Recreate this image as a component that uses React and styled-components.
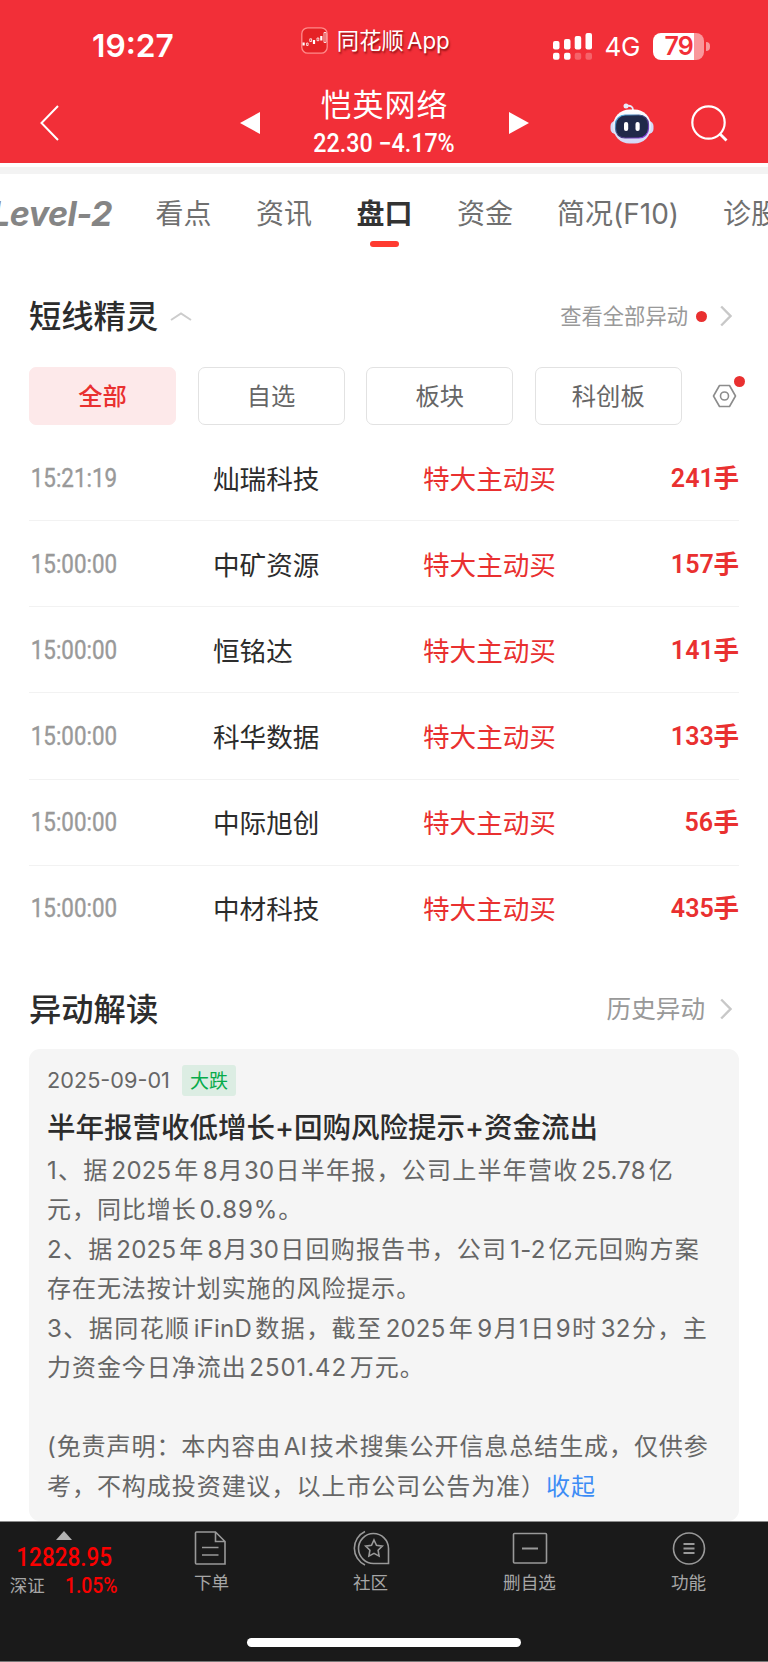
import styled, { createGlobalStyle, css } from "styled-components";

const GlobalStyle = createGlobalStyle`
  * {
    box-sizing: border-box;
  }

  body {
    margin: 0;
    background: #fff;
    font-family: Inter, "Noto Sans CJK SC", sans-serif;
    color: #333;
  }

  svg {
    display: block;
    flex: none;
  }
`;

const TABS = [
  { label: "看点", width: 56 },
  { label: "资讯", width: 56 },
  { label: "盘口", width: 56, active: true },
  { label: "资金", width: 56 },
  { label: "简况(F10)", width: 121 },
  { label: "诊股", width: 56 },
];

const FILTERS = ["全部", "自选", "板块", "科创板"];

const TRADES = [
  { time: "15:21:19", name: "灿瑞科技", volume: "241" },
  { time: "15:00:00", name: "中矿资源", volume: "157" },
  { time: "15:00:00", name: "恒铭达", volume: "141" },
  { time: "15:00:00", name: "科华数据", volume: "133" },
  { time: "15:00:00", name: "中际旭创", volume: "56" },
  { time: "15:00:00", name: "中材科技", volume: "435" },
];

const REPORT_LINES = [
  { text: "1、据 2025 年 8月30日半年报，公司上半年营收 25.78 亿", width: 626 },
  { text: "元，同比增长 0.89%。", width: 0 },
  { text: "2、据 2025 年 8月30日回购报告书，公司 1-2 亿元回购方案", width: 652 },
  { text: "存在无法按计划实施的风险提示。", width: 0 },
  { text: "3、据同花顺 iFinD 数据，截至 2025 年 9月1日9时 32分，主", width: 660 },
  { text: "力资金今日净流出 2501.42 万元。", width: 0 },
  { text: "", width: 0 },
  { text: "(免责声明：本内容由 AI 技术搜集公开信息总结生成，仅供参", width: 661 },
];

const Screen = styled.div`
  display: flex;
  flex-direction: column;
  width: 768px;
  height: 1662px;
  overflow: hidden;
  background: #fff;
`;

const digits = css`
  display: inline-block;
  font-family: Roboto, "Noto Sans CJK SC", sans-serif;
  white-space: nowrap;
`;

/* ---------- red header ---------- */

const Header = styled.header`
  flex: none;
  height: 163px;
  background: #f22f38;
  color: #fff;
`;

const StatusBar = styled.div`
  display: flex;
  align-items: center;
  height: 80px;
  padding: 12px 58px 0 92px;
`;

const Clock = styled.span`
  width: 210px;
  font-size: 31.7px;
  font-weight: 600;
  line-height: 40px;
`;

const AppBadge = styled.div`
  display: flex;
  align-items: center;
  gap: 9px;
  width: 251px;
  margin-top: -11px;
  font-size: 22.3px;
  line-height: 30px;
  white-space: nowrap;
  word-spacing: -3px;
  text-shadow: 1px 2px 2px rgba(90, 0, 0, 0.65);
`;

const Network = styled.span`
  width: 49px;
  margin-top: 2px;
  padding-left: 12px;
  font-size: 26px;
  line-height: 30px;
  letter-spacing: -0.3px;
`;

const Battery = styled.div`
  display: flex;
  align-items: center;
  justify-content: center;
  width: 51px;
  height: 27px;
  margin-left: 12px;
  border-radius: 8px;
  background: linear-gradient(90deg, #fff 41px, #f9979b 41px);
  color: #f22f38;
  font-size: 25px;
  font-weight: 600;
  line-height: 27px;
  letter-spacing: -1px;
`;

const BatteryTip = styled.i`
  width: 4px;
  height: 9px;
  margin-left: 2px;
  border-radius: 0 5px 5px 0;
  background: #f9979b;
`;

const TitleBar = styled.div`
  display: flex;
  align-items: center;
  height: 83px;
  padding: 3px 40px 0;
`;

const StockTitle = styled.div`
  display: flex;
  flex-direction: column;
  align-items: center;
  width: 251px;
  margin-top: -1px;
`;

const StockName = styled.h1`
  margin: 0;
  font-size: 31px;
  font-weight: 400;
  line-height: 42px;
  letter-spacing: 1px;
`;

const StockPrice = styled.span`
  ${digits}
  font-size: 25px;
  font-weight: 500;
  line-height: 35px;
  transform: scaleX(0.93);
`;

const Strip = styled.div`
  flex: none;
  height: 11px;
  border-top: 4px solid #fff;
  background: #f3f3f3;
`;

/* ---------- tabs ---------- */

const Tabs = styled.nav`
  display: flex;
  flex: none;
  gap: 44.5px;
  height: 88px;
  padding-top: 18px;
  overflow: hidden;
`;

const LevelTab = styled.span`
  flex: none;
  width: 111px;
  font-size: 34px;
  font-style: italic;
  font-weight: 700;
  line-height: 43px;
  letter-spacing: -0.5px;
  color: #858585;
  text-indent: -9px;
  white-space: nowrap;
`;

const Tab = styled.span`
  display: flex;
  flex: none;
  flex-direction: column;
  align-items: center;
  gap: 5px;
  width: ${({ $width }) => $width}px;
  font-size: 28px;
  font-weight: ${({ $active }) => ($active ? 700 : 400)};
  line-height: 44px;
  color: ${({ $active }) => ($active ? "#333" : "#707070")};
  white-space: nowrap;

  &::after {
    width: 29px;
    height: 6px;
    border-radius: 3px;
    background: ${({ $active }) => ($active ? "#ff3b30" : "transparent")};
    content: "";
  }
`;

/* ---------- sections ---------- */

const SectionHead = styled.div`
  display: flex;
  flex: none;
  align-items: center;
  height: ${({ $height }) => $height}px;
  padding: ${({ $top }) => $top}px 36px 0 29px;
`;

const SectionTitle = styled.h2`
  margin: 2px 12px 0 0;
  font-size: 32.3px;
  font-weight: 500;
  line-height: 44px;
  color: #2c2c2c;
`;

const MoreLink = styled.span`
  display: flex;
  align-items: center;
  margin-left: auto;
  font-size: ${({ $size }) => $size}px;
  line-height: 32px;
  color: #999;
`;

const Dot = styled.i`
  width: 11px;
  height: 11px;
  margin: 0 13px 0 8px;
  border-radius: 50%;
  background: #e93030;
`;

const Filters = styled.div`
  display: flex;
  flex: none;
  align-items: center;
  gap: 21.6px;
  height: 58px;
  margin: 5px 29px 10px;
`;

const FilterButton = styled.button`
  width: 147px;
  height: 58px;
  padding: 0 0 3px;
  border: 1px solid ${({ $active }) => ($active ? "#fde9ea" : "#e2e2e2")};
  border-radius: 7px;
  background: ${({ $active }) => ($active ? "#fde9ea" : "#fff")};
  color: ${({ $active }) => ($active ? "#e93030" : "#666")};
  font-family: inherit;
  font-size: 24.3px;
  font-weight: ${({ $active }) => ($active ? 500 : 400)};
`;

const Settings = styled.div`
  position: relative;
  margin-left: 9px;
`;

const SettingsDot = styled.i`
  position: absolute;
  top: -8px;
  right: -8px;
  width: 11px;
  height: 11px;
  border-radius: 50%;
  background: #e93030;
`;

const TradeRow = styled.div`
  display: grid;
  flex: none;
  grid-template-columns: 184px 210px 1fr auto;
  align-items: center;
  height: 86.15px;
  margin: 0 29px;
  padding-top: 2px;
  border-bottom: 1.5px solid ${({ $last }) => ($last ? "transparent" : "#f2f2f2")};
  font-size: 26.6px;
  line-height: 40px;
`;

const TradeTime = styled.span`
  ${digits}
  padding-left: 2px;
  font-size: 25px;
  color: #999;
  -webkit-text-stroke: 0.4px #999;
  transform: scaleX(0.895);
  transform-origin: left;
`;

const TradeName = styled.span`
  color: #2c2c2c;
`;

const TradeKind = styled.span`
  color: #e93030;
`;

const TradeVolume = styled.span`
  display: flex;
  align-items: center;
  margin-top: -2px;
  font-size: 25.5px;
  font-weight: 700;
  color: #e93030;

  b {
    ${digits}
    font-size: 25.5px;
    font-weight: 600;
    transform: scaleX(0.98);
    transform-origin: right;
  }
`;

/* ---------- report card ---------- */

const Card = styled.article`
  flex: none;
  height: 472px;
  margin: 0 29px;
  padding: 16px 18px 0;
  border-radius: 11px;
  background: #f5f5f5;
`;

const CardMeta = styled.div`
  display: flex;
  align-items: center;
  gap: 12px;
  height: 31px;
  font-size: 21.7px;
  color: #666;
`;

const Tag = styled.span`
  display: flex;
  align-items: center;
  justify-content: center;
  width: 54px;
  height: 31px;
  padding-bottom: 2px;
  border-radius: 3px;
  background: #dcede3;
  color: #07ab4b;
  font-size: 19px;
`;

const CardTitle = styled.h3`
  margin: 12px 0 3px;
  font-size: 28.5px;
  font-weight: 500;
  line-height: 40px;
  color: #2c2c2c;
  white-space: nowrap;
`;

const ReportLine = styled.p`
  width: ${({ $width }) => ($width ? `${$width}px` : "auto")};
  height: 39.5px;
  margin: 0;
  font-size: 24px;
  line-height: 39.5px;
  letter-spacing: ${({ $width }) => ($width ? 0.2 : 0.95)}px;
  word-spacing: -5px;
  text-align-last: ${({ $width }) => ($width ? "justify" : "left")};
  color: #666;
  white-space: nowrap;
`;

const Collapse = styled.a`
  color: #3d8df5;
`;

/* ---------- bottom bar ---------- */

const Footer = styled.footer`
  display: flex;
  flex: none;
  flex-direction: column;
  align-items: center;
  height: 141px;
  border-top: 1px solid #8c8c8c;
  border-bottom: 1px solid #777;
  background: #1a1a1a;
  color: #a6a6a6;
`;

const FooterRow = styled.div`
  display: flex;
  align-items: flex-start;
  width: 768px;
  height: 116px;
`;

const IndexQuote = styled.div`
  display: flex;
  flex-direction: column;
  align-items: center;
  width: 132px;
  padding: 9px 4px 0 0;
`;

const IndexValue = styled.span`
  ${digits}
  margin-top: 3px;
  font-size: 25px;
  font-weight: 500;
  line-height: 30px;
  color: #f90000;
  transform: scaleX(0.9);
`;

const IndexChange = styled.span`
  display: flex;
  align-items: center;
  gap: 17px;
  margin-top: -1px;
  padding-left: 2px;
  font-size: 17.5px;
  line-height: 28px;

  b {
    ${digits}
    font-size: 21.5px;
    font-weight: 500;
    color: #f90000;
    transform: scaleX(0.9);
  }
`;

const FooterItem = styled.div`
  display: flex;
  flex-direction: column;
  align-items: center;
  gap: 5px;
  width: 159px;
  padding-top: 8px;
  font-size: 17.6px;
  line-height: 24px;
`;

const HomeIndicator = styled.i`
  width: 274px;
  height: 9px;
  border-radius: 5px;
  background: #fff;
`;

const AppIcon = () => (
  <svg width="27" height="27" viewBox="0 0 27 27">
    <rect x=".8" y=".8" width="25.4" height="25.4" rx="6" fill="#e52226" stroke="#ff8b8b" strokeWidth="1.3" />
    <path d="M2.600 15.500v3M13 13v4M20.300 9v4.500" stroke="#fff" strokeWidth="2.200" />
    <path d="M5.600 16h1.500v2.500H5.600zM8.800 11.800h1.800v2.700H8.800zM16 11h1.800v2.700H16zM23 5.500h2v10h-2z" fill="none" stroke="#fff" strokeWidth=".8" />
  </svg>
);

const Signal = () => (
  <svg width="40" height="27" viewBox="0 0 40 27" fill="#fff">
    <rect y="8" width="6.500" height="8.500" rx="2" />
    <rect x="11" y="6" width="6.500" height="10.500" rx="2" />
    <rect x="21.700" y="3" width="6.500" height="13.500" rx="2" />
    <rect x="32.500" width="6.500" height="16.500" rx="2" />
    <rect y="19.800" width="6.500" height="7" rx="2" />
    <rect x="11" y="19.800" width="6.500" height="7" rx="2" />
    <rect x="21.700" y="19.800" width="6.500" height="7" rx="2" opacity=".25" />
    <rect x="32.500" y="19.800" width="6.500" height="7" rx="2" opacity=".25" />
  </svg>
);

const SignalSlot = styled.span`
  margin-left: 2px;
`;

const BackIcon = styled.svg`
  margin-right: 181px;
`;

const RobotIcon = styled.svg`
  margin-right: 37px;
  margin-left: 81px;
`;

const Robot = () => (
  <RobotIcon width="44" height="41" viewBox="0 0 44 41">
    <defs>
      <linearGradient id="shell" x1="0" y1="0" x2="0" y2="1">
        <stop offset="0" stopColor="#fff" />
        <stop offset="1" stopColor="#d3d7f5" />
      </linearGradient>
      <linearGradient id="rim" x1="0" y1="0" x2="1" y2="1">
        <stop offset="0" stopColor="#55c4f4" />
        <stop offset=".5" stopColor="#3b3970" />
        <stop offset="1" stopColor="#9a43ef" />
      </linearGradient>
    </defs>
    <path d="M16 3c5-1 7 1 7 4" fill="none" stroke="#e6eafa" strokeWidth="1.800" />
    <circle cx="16" cy="3" r="2.500" fill="#e8ecfa" />
    <rect x=".5" y="18" width="43" height="13" rx="5" fill="#d5daf6" />
    <rect x="3" y="6.500" width="38" height="34" rx="16.500" fill="url(#shell)" />
    <rect x="5.500" y="12" width="33" height="23" rx="9.500" fill="#202949" stroke="url(#rim)" strokeWidth="1.200" />
    <rect x="14" y="19" width="4.200" height="9" rx="2" fill="#fff" />
    <rect x="25.500" y="19" width="4.200" height="9" rx="2" fill="#fff" />
  </RobotIcon>
);

const Chevron = () => (
  <svg width="12" height="22" viewBox="0 0 12 22" fill="none" stroke="#c8c8c8" strokeWidth="2.400">
    <path d="M1.200 1.500l9.300 9.500-9.300 9.500" />
  </svg>
);

const ChevronGap = styled.i`
  width: 15px;
`;

const OrderIcon = () => (
  <svg width="36" height="36" viewBox="2.500 0 36 36" fill="none" stroke="#999" strokeWidth="1.600">
    <path d="M5 2h19l9.500 9.500V34H5a1 1 0 0 1-1-1V3a1 1 0 0 1 1-1zM24 2v9.500h9.500" />
    <path d="M10.500 17.500H27M10.500 25H27" />
  </svg>
);

const CommunityIcon = () => (
  <svg width="38" height="36" viewBox="0 0 38 36" fill="none" stroke="#999" strokeWidth="1.600">
    <path d="M36.500 33.500H22A15 15 0 1 1 36.500 18.500zM13 1.500a18.500 18.500 0 0 0 0 33.500" />
    <path d="M22 10l2.500 5.300 5.800.8-4.200 4.100 1 5.900-5.100-2.800-5.100 2.800 1-5.900-4.200-4.100 5.800-.8z" />
  </svg>
);

const RemoveIcon = () => (
  <svg width="36" height="36" viewBox="0 0 36 36" fill="none" stroke="#999" strokeWidth="1.600">
    <rect x="1.500" y="3.500" width="33" height="29.500" rx="1" />
    <path d="M10 18.500h16" strokeWidth="2" />
  </svg>
);

const FunctionIcon = () => (
  <svg width="36" height="36" viewBox="0 0 36 36" fill="none" stroke="#999" strokeWidth="1.600">
    <circle cx="18" cy="18.500" r="15.500" />
    <path d="M12.500 14h11M12.500 18.500h11M12.500 23h11" strokeWidth="1.800" />
  </svg>
);

const FOOTER_ITEMS = [
  { label: "下单", icon: OrderIcon },
  { label: "社区", icon: CommunityIcon },
  { label: "删自选", icon: RemoveIcon },
  { label: "功能", icon: FunctionIcon },
];

function App() {
  return (
    <Screen>
      <GlobalStyle />
      <Header>
        <StatusBar>
          <Clock>19:27</Clock>
          <AppBadge>
            <AppIcon />
            同花顺 App
          </AppBadge>
          <SignalSlot>
            <Signal />
          </SignalSlot>
          <Network>4G</Network>
          <Battery>79</Battery>
          <BatteryTip />
        </StatusBar>
        <TitleBar>
          <BackIcon width="19" height="36" viewBox="0 0 19 36" fill="none" stroke="#fff" strokeWidth="2">
            <path d="M18 1L1.500 18 18 35" />
          </BackIcon>
          <svg width="20" height="22" fill="#fff">
            <path d="M20 0v22L0 11z" />
          </svg>
          <StockTitle>
            <StockName>恺英网络</StockName>
            <StockPrice>22.30 −4.17%</StockPrice>
          </StockTitle>
          <svg width="20" height="22" fill="#fff">
            <path d="M0 0v22l20-11z" />
          </svg>
          <Robot />
          <svg width="37" height="37" viewBox="0 0 37 37" fill="none" stroke="#fff" strokeWidth="2.200">
            <circle cx="17.500" cy="17.500" r="16.200" />
            <path d="M28.500 28.500l7 7" strokeWidth="2.800" />
          </svg>
        </TitleBar>
      </Header>
      <Strip />

      <Tabs>
        <LevelTab>Level-2</LevelTab>
        {TABS.map(({ label, width, active }) => (
          <Tab key={label} $width={width} $active={active}>
            {label}
          </Tab>
        ))}
      </Tabs>

      <SectionHead $height={100} $top={8}>
        <SectionTitle>短线精灵</SectionTitle>
        <svg width="22" height="9" viewBox="0 0 22 9" fill="none" stroke="#ccc" strokeWidth="2">
          <path d="M1 8l10-6.500L21 8" />
        </svg>
        <MoreLink $size={21.3}>
          查看全部异动
          <Dot />
          <Chevron />
        </MoreLink>
      </SectionHead>

      <Filters>
        {FILTERS.map((filter, index) => (
          <FilterButton key={filter} $active={index === 0}>
            {filter}
          </FilterButton>
        ))}
        <Settings>
          <svg width="25" height="24" viewBox="0 0 25 24" fill="none" stroke="#8c8c8c" strokeWidth="1.600">
            <path d="M7.500 1.500h10l6 10.500-6 10.500h-10L1.500 12z" strokeLinejoin="round" />
            <circle cx="12.500" cy="12" r="4" />
          </svg>
          <SettingsDot />
        </Settings>
      </Filters>

      {TRADES.map(({ time, name, volume }, index) => (
        <TradeRow key={name} $last={index === TRADES.length - 1}>
          <TradeTime>{time}</TradeTime>
          <TradeName>{name}</TradeName>
          <TradeKind>特大主动买</TradeKind>
          <TradeVolume>
            <b>{volume}</b>手
          </TradeVolume>
        </TradeRow>
      ))}

      <SectionHead $height={97} $top={17}>
        <SectionTitle>异动解读</SectionTitle>
        <MoreLink $size={24.6}>
          历史异动
          <ChevronGap />
          <Chevron />
        </MoreLink>
      </SectionHead>

      <Card>
        <CardMeta>
          2025-09-01
          <Tag>大跌</Tag>
        </CardMeta>
        <CardTitle>半年报营收低增长+回购风险提示+资金流出</CardTitle>
        {REPORT_LINES.map(({ text, width }, index) => (
          <ReportLine key={index} $width={width}>
            {text}
          </ReportLine>
        ))}
        <ReportLine>
          考，不构成投资建议，以上市公司公告为准）<Collapse>收起</Collapse>
        </ReportLine>
      </Card>

      <Footer>
        <FooterRow>
          <IndexQuote>
            <svg width="16" height="9" fill="#b3b3b3">
              <path d="M8 0l8 9H0z" />
            </svg>
            <IndexValue>12828.95</IndexValue>
            <IndexChange>
              深证 <b>1.05%</b>
            </IndexChange>
          </IndexQuote>
          {FOOTER_ITEMS.map(({ label, icon: Icon }) => (
            <FooterItem key={label}>
              <Icon />
              {label}
            </FooterItem>
          ))}
        </FooterRow>
        <HomeIndicator />
      </Footer>
    </Screen>
  );
}

export default App;
